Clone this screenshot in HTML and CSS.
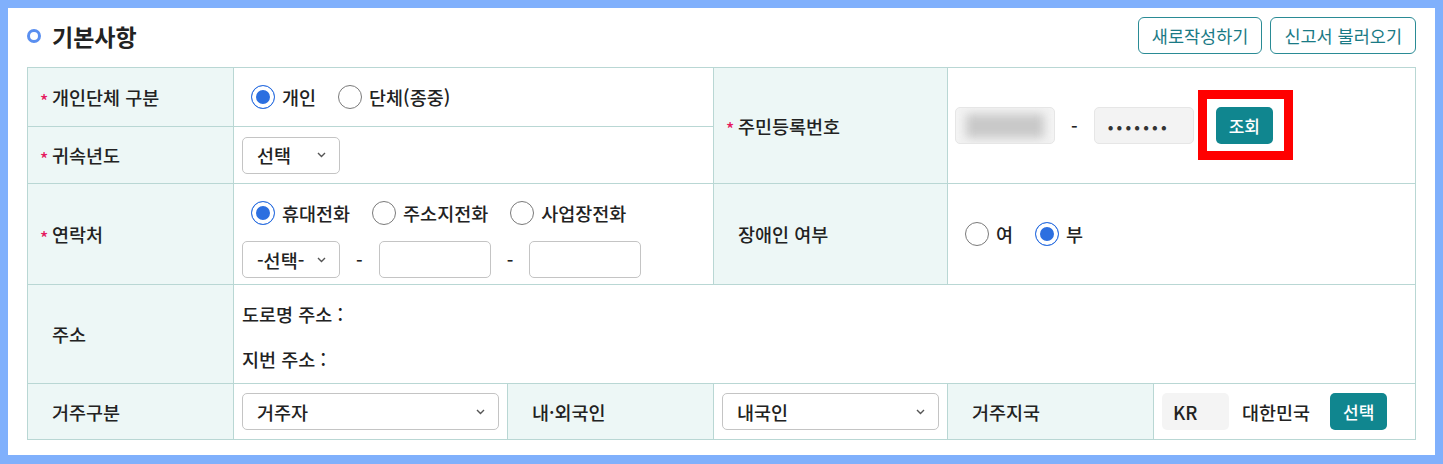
FILE: index.html
```html
<!DOCTYPE html>
<html lang="ko">

<head>
	<meta charset="UTF-8">
	<meta name="viewport" content="width=device-width, initial-scale=1.0">
	<title>기본사항</title>
	<link rel="stylesheet" href="styles.css">
</head>

<body>
	<section class="panel">
		<div class="panel-head">
			<h2 class="title"><span class="title-dot"></span>기본사항</h2>
			<div class="head-btns">
				<button class="btn-line">새로작성하기</button>
				<button class="btn-line">신고서 불러오기</button>
			</div>
		</div>

		<div class="form-grid">
			<!-- 1행 -->
			<div class="th"><span class="req">*</span>개인단체 구분</div>
			<div class="td span2">
				<div class="radios">
					<label class="radio"><span class="rd on"></span>개인</label>
					<label class="radio"><span class="rd"></span>단체(종중)</label>
				</div>
			</div>
			<div class="th rows2"><span class="req">*</span>주민등록번호</div>
			<div class="td span2 rows2 jumin">
				<span class="box mask"><span class="blur"></span></span>
				<span class="dash">-</span>
				<span class="box pw">•••••••</span>
				<span class="mark"><button class="btn-fill">조회</button></span>
			</div>

			<!-- 2행 -->
			<div class="th"><span class="req">*</span>귀속년도</div>
			<div class="td span2">
				<div class="sel w98">선택
					<svg class="chev" width="9" height="6" viewBox="0 0 9 6"><path d="M1 1l3.5 3.5L8 1" /></svg>
				</div>
			</div>

			<!-- 3행 -->
			<div class="th"><span class="req">*</span>연락처</div>
			<div class="td span2 contact">
				<div class="radios">
					<label class="radio"><span class="rd on"></span>휴대전화</label>
					<label class="radio"><span class="rd"></span>주소지전화</label>
					<label class="radio"><span class="rd"></span>사업장전화</label>
				</div>
				<div class="phone">
					<div class="sel w98">-선택-
						<svg class="chev" width="9" height="6" viewBox="0 0 9 6"><path d="M1 1l3.5 3.5L8 1" /></svg>
					</div>
					<span>-</span>
					<span class="inp"></span>
					<span>-</span>
					<span class="inp"></span>
				</div>
			</div>
			<div class="th">장애인 여부</div>
			<div class="td span2">
				<div class="radios">
					<label class="radio"><span class="rd"></span>여</label>
					<label class="radio"><span class="rd on"></span>부</label>
				</div>
			</div>

			<!-- 4행 -->
			<div class="th">주소</div>
			<div class="td span5 addr">
				<p>도로명 주소 :</p>
				<p>지번 주소 :</p>
			</div>

			<!-- 5행 -->
			<div class="th">거주구분</div>
			<div class="td">
				<div class="sel w257">거주자
					<svg class="chev" width="9" height="6" viewBox="0 0 9 6"><path d="M1 1l3.5 3.5L8 1" /></svg>
				</div>
			</div>
			<div class="th">내·외국인</div>
			<div class="td">
				<div class="sel w217">내국인
					<svg class="chev" width="9" height="6" viewBox="0 0 9 6"><path d="M1 1l3.5 3.5L8 1" /></svg>
				</div>
			</div>
			<div class="th">거주지국</div>
			<div class="td country">
				<span class="box code">KR</span>
				<span class="country-name">대한민국</span>
				<button class="btn-fill">선택</button>
			</div>
		</div>
	</section>
</body>

</html>
```

FILE: styles.css
```css
* {
	margin: 0;
	padding: 0;
	box-sizing: border-box;
}

body {
	height: 100vh;
	padding: 8px;
	background: #80b0fc;
	font-family: "Noto Sans CJK KR", sans-serif;
	font-size: 18.5px;
	font-weight: 500;
	color: #222;
}

.panel {
	height: 447px;
	padding: 9px 19px 0;
	background: #fff;
}

.panel-head {
	display: flex;
	justify-content: space-between;
	align-items: center;
	height: 37px;
	margin-bottom: 13px;
}

.title {
	display: flex;
	align-items: center;
	font-size: 23px;
	font-weight: 700;
	color: #222;
}

.title-dot {
	width: 14px;
	height: 14px;
	margin-right: 11px;
	border: 3px solid #5a8ff0;
	border-radius: 50%;
}

.head-btns {
	display: flex;
	gap: 8px;
}

.btn-line {
	height: 37px;
	padding: 0 13px;
	border: 1px solid #2a8b95;
	border-radius: 6px;
	background: #fff;
	color: #1a7a85;
	font-family: inherit;
	font-size: 17.5px;
	font-weight: 400;
}

.btn-fill {
	height: 37px;
	padding: 0 13px;
	border: none;
	border-radius: 5px;
	background: #10868f;
	color: #fff;
	font-family: inherit;
	font-size: 17px;
	font-weight: 500;
}

/* 표 */
.form-grid {
	display: grid;
	grid-template-columns: 205px 273px 205px 233px 205px 1fr;
	grid-template-rows: 58px 56px 100px 98px 55px;
	gap: 1px;
	padding: 1px;
	background: #b9d7d4;
}

.th {
	display: flex;
	align-items: center;
	padding-left: 24px;
	background: #edf7f6;
}

.td {
	display: flex;
	align-items: center;
	padding-left: 8px;
	background: #fff;
}

.span2 {
	grid-column: span 2;
}

.span5 {
	grid-column: span 5;
}

.rows2 {
	grid-row: span 2;
}

.req {
	width: 12px;
	margin-left: -12px;
	padding-top: 6px;
	color: #e5195e;
	font-size: 17px;
	line-height: 15px;
}

/* 라디오 */
.radios {
	display: flex;
	align-items: center;
	margin-left: 9px;
	gap: 22px;
}

.radio {
	display: flex;
	align-items: center;
}

.rd {
	width: 24px;
	height: 24px;
	margin-right: 7px;
	border: 1px solid #7a7a7a;
	border-radius: 50%;
	background: #fff;
}

.rd.on {
	border-color: #2c6fe0;
	background: #2c6fe0;
	box-shadow: inset 0 0 0 4px #fff;
}

/* 셀렉트, 입력 */
.sel {
	display: flex;
	justify-content: space-between;
	align-items: center;
	height: 37px;
	padding: 0 13px 0 14px;
	border: 1px solid #c4c4c4;
	border-radius: 5px;
	background: #fff;
}

.chev path {
	fill: none;
	stroke: #555;
	stroke-width: 1.4;
}

.w98 {
	width: 98px;
}

.w257 {
	width: 257px;
}

.w217 {
	width: 217px;
}

.inp {
	width: 112px;
	height: 37px;
	border: 1px solid #c4c4c4;
	border-radius: 5px;
}

.contact {
	flex-direction: column;
	align-items: flex-start;
	padding-top: 16px;
}

.phone {
	display: flex;
	align-items: center;
	gap: 16px;
	margin-top: 15px;
}

.addr {
	flex-direction: column;
	align-items: flex-start;
	gap: 20px;
	padding-top: 17px;
}

.addr p {
	line-height: 25px;
}

/* 주민등록번호 */
.jumin {
	padding-left: 7px;
}

.box {
	display: flex;
	align-items: center;
	width: 100px;
	height: 37px;
	border: 1px solid #e6e6e6;
	border-radius: 5px;
	background: #f3f3f3;
}

.mask {
	justify-content: center;
	overflow: hidden;
}

.blur {
	width: 78px;
	height: 24px;
	background: #c9c9c9;
	filter: blur(5px);
}

.dash {
	margin: 0 16px;
}

.pw {
	padding-left: 13px;
	font-size: 16px;
	letter-spacing: 3.2px;
	color: #333;
}

.mark {
	position: relative;
	margin-left: 22px;
}

.mark::after {
	content: "";
	position: absolute;
	left: -18px;
	right: -20px;
	top: -17px;
	bottom: -16px;
	border: 9px solid #ff0000;
}

/* 거주지국 */
.code {
	width: 67px;
	padding-left: 11px;
	border: none;
	background: #f4f4f4;
}

.country-name {
	margin: 0 20px 0 13px;
}
```
